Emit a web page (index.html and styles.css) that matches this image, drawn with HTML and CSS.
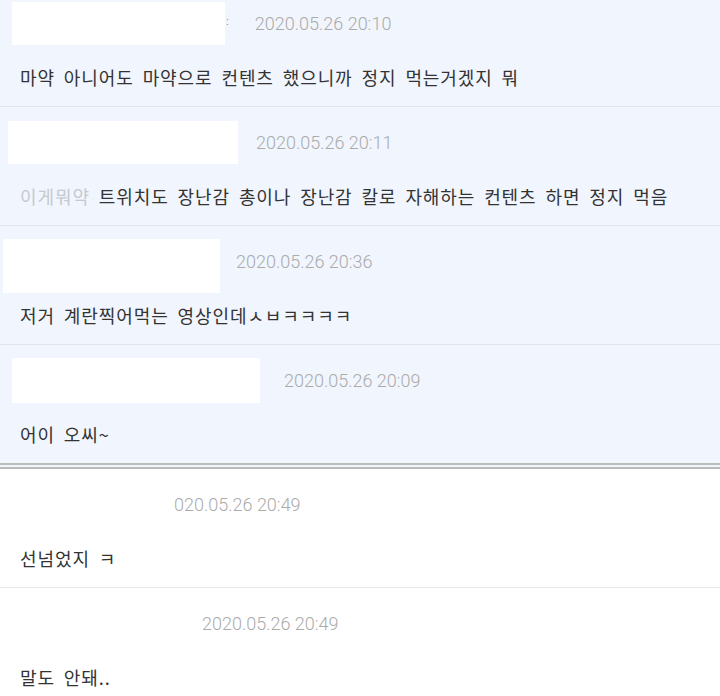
FILE: index.html
```html
<!DOCTYPE html>
<html lang="ko">
<head>
  <meta charset="UTF-8">
  <meta name="viewport" content="width=device-width, initial-scale=1.0">
  <title>댓글</title>
  <link rel="stylesheet" href="styles.css">
</head>
<body>

  <div class="comments">

    <div class="comment">
      <div class="head">
        <span class="mask mask-1"></span>
        <span class="dots">:</span>
        <span class="date date-1">2020.05.26 20:10</span>
      </div>
      <p class="text">마약 아니어도 마약으로 컨텐츠 했으니까 정지 먹는거겠지 뭐</p>
    </div>

    <div class="comment">
      <div class="head">
        <span class="mask mask-2"></span>
        <span class="date date-2">2020.05.26 20:11</span>
      </div>
      <p class="text"><span class="mention">이게뭐약</span> 트위치도 장난감 총이나 장난감 칼로 자해하는 컨텐츠 하면 정지 먹음</p>
    </div>

    <div class="comment">
      <div class="head">
        <span class="mask mask-3"></span>
        <span class="date date-3">2020.05.26 20:36</span>
      </div>
      <p class="text">저거 계란찍어먹는 영상인데ㅅㅂㅋㅋㅋㅋ</p>
    </div>

    <div class="comment last-blue">
      <div class="head">
        <span class="mask mask-4"></span>
        <span class="date date-4">2020.05.26 20:09</span>
      </div>
      <p class="text">어이 오씨~</p>
    </div>

    <div class="comment plain">
      <div class="head">
        <span class="mask mask-5"></span>
        <span class="date date-5">020.05.26 20:49</span>
      </div>
      <p class="text">선넘었지 ㅋ</p>
    </div>

    <div class="comment plain">
      <div class="head">
        <span class="mask mask-6"></span>
        <span class="date date-6">2020.05.26 20:49</span>
      </div>
      <p class="text">말도 안돼..</p>
    </div>

  </div>

</body>
</html>
```

FILE: styles.css
```css
body {
  margin: 0;
  padding: 0;
  background-color: #ffffff;
  font-family: "Noto Sans CJK KR", "Noto Sans", sans-serif;
  color: #333333;
  overflow: hidden;
}

.comments {
  margin-top: -12px;
}

.comment {
  background-color: #f1f5fd;
  border-bottom: 1px solid #dfe4ee;
  padding: 13px 0 17px 0;
}

.comment.last-blue {
  border-bottom: 6px double #bcbcbc;
}

.comment.plain {
  background-color: #ffffff;
  border-bottom: 1px solid #e8e8e8;
}

.head {
  display: flex;
  align-items: center;
  height: 44px;
}

.mask {
  display: block;
  background-color: #ffffff;
  height: 43px;
  flex-shrink: 0;
}

.mask-1 { margin-left: 12px; width: 213px; }
.mask-2 { margin-left: 8px; width: 230px; }
.mask-3 { margin-left: 3px; width: 217px; height: 54px; align-self: flex-start; }
.mask-4 { margin-left: 12px; width: 248px; height: 45px; }
.mask-5 { margin-left: 8px; width: 150px; }
.mask-6 { margin-left: 8px; width: 178px; }

.dots {
  font-family: "Liberation Sans", sans-serif;
  font-size: 10px;
  color: #8a8a8a;
  margin-left: 1px;
  margin-top: -4px;
}

.date {
  font-family: Roboto, "Liberation Sans", sans-serif;
  font-weight: 300;
  font-size: 18px;
  color: #ababab;
  white-space: nowrap;
}

.date-1 { margin-left: 26px; }
.date-2 { margin-left: 18px; }
.date-3 { margin-left: 16px; }
.date-4 { margin-left: 24px; }
.date-5 { margin-left: 16px; }
.date-6 { margin-left: 16px; }

.text {
  margin: 20px 0 0 0;
  padding-left: 20px;
  font-size: 18px;
  line-height: 24px;
  letter-spacing: 0.9px;
  word-spacing: 3px;
  white-space: nowrap;
}

.mention {
  color: #c5c9d1;
}
```
